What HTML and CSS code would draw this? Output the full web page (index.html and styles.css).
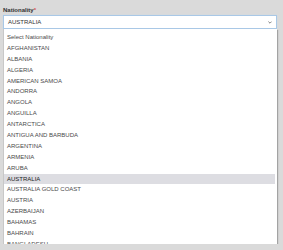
FILE: index.html
```html
<!DOCTYPE html>
<html lang="en">
<head>
  <meta charset="UTF-8" />
  <title>Nationality</title>
  <link rel="stylesheet" href="styles.css">
</head>
<body>

  <div class="field">
    <label class="field-label">Nationality<span class="req">*</span></label>

    <!-- closed select, focused -->
    <div class="select-box">
      <span class="select-value">AUSTRALIA</span>
      <svg class="chevron" width="4" height="3" viewBox="0 0 4 3">
        <path d="M0.4 0.6 L2 2.2 L3.6 0.6" fill="none" stroke="#666" stroke-width="0.8"/>
      </svg>
    </div>

    <!-- open option list -->
    <ul class="options">
      <li>Select Nationality</li>
      <li>AFGHANISTAN</li>
      <li>ALBANIA</li>
      <li>ALGERIA</li>
      <li>AMERICAN SAMOA</li>
      <li>ANDORRA</li>
      <li>ANGOLA</li>
      <li>ANGUILLA</li>
      <li>ANTARCTICA</li>
      <li>ANTIGUA AND BARBUDA</li>
      <li>ARGENTINA</li>
      <li>ARMENIA</li>
      <li>ARUBA</li>
      <li class="active">AUSTRALIA</li>
      <li>AUSTRALIA GOLD COAST</li>
      <li>AUSTRIA</li>
      <li>AZERBAIJAN</li>
      <li>BAHAMAS</li>
      <li>BAHRAIN</li>
      <li>BANGLADESH</li>
    </ul>
  </div>

</body>
</html>
```

FILE: styles.css
```css
body {
  margin: 0;
  padding: 6px 6px 0 3px;
  font-family: "Liberation Sans", Arial, sans-serif;
  background-color: #dadada;
}

.field {
  display: flex;
  flex-direction: column;
}

.field-label {
  font-size: 6px;
  font-weight: bold;
  line-height: 8px;
  color: #333;
  margin-bottom: 1px;
}

.req {
  color: #d9534f;
}

.select-box {
  display: flex;
  align-items: center;
  justify-content: space-between;
  height: 12px;
  padding: 0 4px 0 4px;
  background: white;
  border: 1px solid #a9c8e6;
  box-shadow: 0 0 1px #c4daee;
}

.select-value {
  font-size: 6px;
  color: #333;
}

.options {
  list-style: none;
  margin: 0;
  padding: 3px 2px 0 0;
  height: 212px;
  overflow: hidden;
  background: white;
  border-left: 1px solid #c8c8c8;
  box-shadow: 1px 1px 1px rgba(0,0,0,0.25);
}

.options li {
  height: 10.9px;
  line-height: 10.9px;
  padding-left: 3px;
  font-size: 6px;
  color: #4a4a4a;
}

.options li.active {
  background-color: #dddde2;
  color: #222;
}
```
